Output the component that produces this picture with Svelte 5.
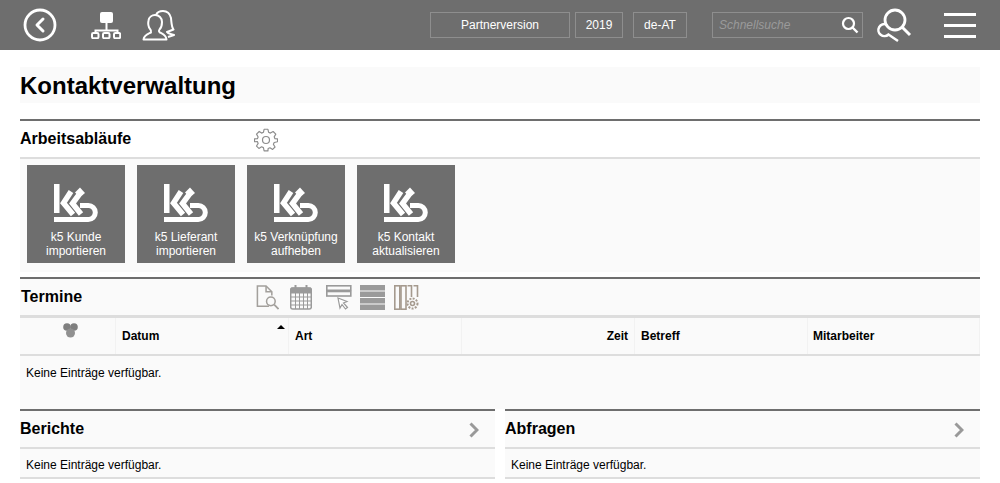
<script>
  const tiles = [
    ['k5 Kunde', 'importieren'],
    ['k5 Lieferant', 'importieren'],
    ['k5 Verknüpfung', 'aufheben'],
    ['k5 Kontakt', 'aktualisieren']
  ];
  const cols = [
    { label: 'Datum', cls: 'sorted' },
    { label: 'Art', cls: '' },
    { label: 'Zeit', cls: 'right' },
    { label: 'Betreff', cls: '' },
    { label: 'Mitarbeiter', cls: 'last' }
  ];
  const panels = ['Berichte', 'Abfragen'];
</script>

<header class="top">
  <svg class="ic-back" viewBox="0 0 34 34" fill="none" stroke="#fff"><circle cx="17" cy="17" r="15" stroke-width="2.8"/><path d="M20 11l-6 6 6 6" stroke-width="3" stroke-linecap="round" stroke-linejoin="round"/></svg>
  <svg class="ic-org" viewBox="0 0 30 27" fill="none" stroke="#fff" stroke-width="2"><rect x="9" y="0" width="13" height="11" rx="2" fill="#fff" stroke="none"/><path d="M15.500 11v8M4.500 21v-2.500h22V21"/><rect x="1" y="21" width="6.500" height="5.200" rx="1.300"/><rect x="12" y="21" width="6.500" height="5.200" rx="1.300"/><rect x="23" y="21" width="6.200" height="5.200" rx="1.300"/></svg>
  <svg class="ic-users" viewBox="0 0 33 31" fill="none" stroke="#fff" stroke-width="2" stroke-linejoin="round"><path d="M1.500 29.500C2 25 6 24 9 22.500C9.500 21 9 20 8 19C6.500 17 6 13 6.500 10.500C7 7 10 5 13 5C17 5 20 8 20 12C20 15 19 18 17.500 19.500C16.500 21 17 22 18 22.500C21 24 24 25 24.500 29.500Z"/><path d="M14 5C15 2.500 18 1 21 1C25 1 28 4 29 8C29.500 13 29.500 17 31.500 19.500L25 22C26 24 30 24 32 25L26 27"/></svg>
  <div class="field f-version">Partnerversion</div>
  <div class="field f-year">2019</div>
  <div class="field f-lang">de-AT</div>
  <div class="field f-search">
    <span class="ph">Schnellsuche</span>
    <svg viewBox="0 0 18 18" fill="none" stroke="#fff"><circle cx="7.500" cy="7.500" r="5.500" stroke-width="2.200"/><path d="M11.500 11.500l5 5" stroke-width="2.400"/></svg>
  </div>
  <svg class="ic-bigsearch" viewBox="0 0 33 33" fill="none" stroke="#fff"><circle cx="17" cy="11" r="10" stroke-width="2.800"/><path d="M24 18l8 8" stroke-width="3"/><path d="M8.500 15.500A6 6 0 1 0 10.500 25.500L20 32" stroke-width="2.500"/></svg>
  <div class="burger"><i></i><i></i><i></i></div>
</header>

<main class="page">
  <h1>Kontaktverwaltung</h1>

  <section class="workflow">
    <div class="head head-white">
      <h2>Arbeitsabläufe</h2>
      <svg class="ic-gear" viewBox="0 0 24 24" fill="none" stroke="#8c8c8c" stroke-width="1.200" stroke-linejoin="round"><path d="M10 1h4l.7 3.200 1.900.8L19.400 3.300l2.800 2.800-1.700 2.800.8 1.900L24 11v3l-3.500.8-.8 1.900 1.700 2.800-2.500 2.500-2.800-1.700-1.900.8L14 23.500h-4l-.7-3.400-1.900-.8-2.800 1.700-2.500-2.500 1.700-2.800-.8-1.900L0 14v-3l3-.1.800-1.900L2.100 6.100l2.800-2.800L7.400 5l1.900-.8z" transform="translate(.5 .3) scale(.96)"/><circle cx="12" cy="12" r="3.500"/></svg>
    </div>
    <div class="tiles">
      {#each tiles as t}
        <div class="tile">
          <svg class="logo" viewBox="0 0 44 38" fill="none" stroke="#fff">
            <path d="M0 0h5.500v29H0z" fill="#fff" stroke="none"/>
            <path d="M17 7.500L9.500 19 19 30.500" stroke-width="5.500"/>
            <path d="M27 8L18.500 19.500 27 30" stroke-width="5.500"/>
            <path d="M0 35.500H34.300A7 7 0 0 0 34.300 21.500H26" stroke-width="5"/>
            <path d="M21 8.500L26 3.500l5 5.500-3 2.500-4 0z" fill="#fff" stroke="none"/>
          </svg>
          <span>{t[0]}</span>
          <span>{t[1]}</span>
        </div>
      {/each}
    </div>
  </section>

  <section class="dates">
    <div class="head head-dates">
      <h2>Termine</h2>
      <div class="tools">
        <svg class="t1" viewBox="0 0 23 26" fill="none" stroke="#a3a09c" stroke-width="1.600"><path d="M13 22H1V1h9l6 6v4"/><path d="M10 1v6h6"/><circle cx="15" cy="17" r="4.500"/><path d="M18.500 20.500l4.500 4.500" stroke-width="1.800"/></svg>
        <svg class="t2" viewBox="0 0 22 25" fill="none" stroke="#9a9a9a"><rect x=".7" y="3" width="20.600" height="21" rx="2" stroke-width="1.500"/><path d="M1 3h20v5H1z" fill="#9a9a9a"/><path d="M5.500 0v5M16.500 0v5" stroke-width="2"/><path d="M1 12h20M1 16h20M1 20h20M5.500 8v16M9.500 8v16M13.500 8v16M17.500 8v16" stroke-width="1"/></svg>
        <svg class="t3" viewBox="0 0 26 25" fill="none" stroke="#9a9a9a"><rect x=".8" y=".8" width="24" height="4.500" stroke-width="1.600"/><rect x=".8" y="6.500" width="24" height="4.500" stroke-width="1.600"/><path d="M12 13l9 3.500-3.500 1.500 4 4.500-2 1.500-3.500-4.500-2 3.500z" fill="#fff" stroke-width="1.200"/></svg>
        <svg class="t4" viewBox="0 0 25 25" fill="#9a9a9a"><rect width="25" height="5.500"/><rect y="6.500" width="25" height="5.500"/><rect y="13" width="25" height="5.500"/><rect y="19.500" width="25" height="5.500"/></svg>
        <svg class="t5" viewBox="0 0 25 25" fill="none" stroke="#a59a8e" stroke-width="1.600"><rect x=".8" y=".8" width="5" height="23.400"/><rect x="7" y=".8" width="5" height="23.400"/><path d="M13.500.8h4V12M19.500.8h4V12"/><circle cx="18.500" cy="18.500" r="2"/><circle cx="18.500" cy="18.500" r="5" stroke-width="2" stroke-dasharray="2 1.300"/></svg>
      </div>
    </div>
    <div class="thead">
      <div class="th th-first">
        <svg class="ic-circles" viewBox="0 0 15 15" fill="#7f7f7f"><circle cx="4" cy="4" r="3.800"/><circle cx="11" cy="4" r="3.800"/><circle cx="7.500" cy="10" r="4.500" fill="#909090"/></svg>
      </div>
      {#each cols as c}
        <div class="th {c.cls}">
          {c.label}
          {#if c.cls === 'sorted'}<i class="arrow"></i>{/if}
        </div>
      {/each}
    </div>
    <p class="empty">Keine Einträge verfügbar.</p>
  </section>

  <div class="panels">
    {#each panels as p}
      <section class="panel">
        <div class="head head-panel">
          <h2>{p}</h2>
          <svg class="ic-chev" viewBox="0 0 10 16" fill="none" stroke="#999" stroke-width="3"><path d="M1.500 1.500L8 8l-6.500 6.500"/></svg>
        </div>
        <p class="empty-sm">Keine Einträge verfügbar.</p>
      </section>
    {/each}
  </div>
</main>

<style>
  :global(body) {
    margin: 0;
    background: #fff;
    font-family: "Liberation Sans", Arial, sans-serif;
    color: #000;
  }
  svg { display: block; flex: none; }

  .top {
    height: 50px;
    background: #6e6e6e;
    display: flex;
    align-items: center;
    color: #fff;
    font-size: 12px;
  }
  .ic-back { width: 34px; height: 34px; margin-left: 23px; }
  .ic-org { width: 30px; height: 27px; margin-left: 34px; }
  .ic-users { width: 33px; height: 31px; margin-left: 21px; }
  .field {
    height: 26px;
    box-sizing: border-box;
    border: 1px solid #8e8e8e;
    display: flex;
    align-items: center;
    justify-content: center;
  }
  .f-version { width: 140px; margin-left: 255px; }
  .f-year { width: 48px; margin-left: 5px; }
  .f-lang { width: 54px; margin-left: 10px; }
  .f-search {
    width: 151px;
    margin-left: 25px;
    justify-content: space-between;
    padding: 0 3px 0 6px;
  }
  .f-search svg { width: 18px; height: 18px; }
  .ph { color: #9a9a9a; font-style: italic; }
  .ic-bigsearch { width: 33px; height: 33px; margin-left: 15px; margin-top: 1px; overflow: visible; }
  .burger {
    width: 32px;
    height: 25px;
    margin-left: 33px;
    display: flex;
    flex-direction: column;
    justify-content: space-between;
  }
  .burger i { display: block; height: 3px; background: #fff; }

  .page { padding: 17px 20px 0; }
  h1 {
    margin: 0 0 16px;
    height: 36px;
    line-height: 37px;
    background: #fafafa;
    font-size: 24px;
    font-weight: 700;
  }
  h2 { margin: 0; font-size: 16px; font-weight: 700; }

  .head {
    height: 36px;
    display: flex;
    align-items: center;
    border-top: 2px solid #6e6e6e;
  }
  .head-white { border-bottom: 2px solid #ddd; }
  .head-white h2 { width: 234px; }
  .ic-gear { width: 24px; height: 24px; margin-top: 2px; }

  .tiles {
    height: 113px;
    box-sizing: border-box;
    background: #fafafa;
    padding: 6px 7px 0;
    display: flex;
    align-items: flex-start;
    gap: 12px;
  }
  .tile {
    width: 98px;
    height: 98px;
    background: #6e6e6e;
    color: #fff;
    font-size: 12px;
    line-height: 14px;
    display: flex;
    flex-direction: column;
    align-items: center;
    white-space: nowrap;
  }
  .logo { width: 44px; height: 38px; margin: 19px 0 8px; }

  .dates { margin-top: 5px; background: #fafafa; height: 132px; }
  .head-dates h2 { width: 235px; padding-left: 1px; }
  .tools { display: flex; align-items: flex-start; }
  .tools svg { height: 25px; }
  .t1 { width: 23px; }
  .t2 { width: 22px; margin-left: 11px; }
  .t3 { width: 26px; margin-left: 14px; }
  .t4 { width: 25px; margin-left: 8px; }
  .t5 { width: 25px; margin-left: 9px; }

  .thead {
    display: grid;
    grid-template-columns: 96px repeat(4, 173px) 172px;
    height: 36px;
    border-top: 3px solid #ddd;
    border-bottom: 2px solid #ddd;
  }
  .th {
    position: relative;
    box-sizing: border-box;
    border-right: 1px solid #f2f2f2;
    padding: 11px 6px 0 6px;
    font-size: 12px;
    font-weight: 700;
    line-height: 14px;
    white-space: nowrap;
  }
  .th.right { text-align: right; }
  .th.last { padding-left: 5px; }
  .th-first { display: flex; justify-content: center; padding: 5px 0 0 6px; }
  .ic-circles { width: 15px; height: 15px; }
  .arrow {
    position: absolute;
    right: 3px;
    top: 7px;
    width: 0;
    height: 0;
    border-left: 4px solid transparent;
    border-right: 4px solid transparent;
    border-bottom: 4px solid #000;
  }
  .empty {
    margin: 0;
    padding: 10px 6px 0;
    font-size: 12px;
    line-height: 14px;
  }

  .panels { display: flex; justify-content: space-between; }
  .panel { width: 475px; background: #fafafa; }
  .head-panel { justify-content: space-between; padding-right: 16px; border-bottom: 2px solid #ddd; }
  .ic-chev { width: 10px; height: 16px; margin-top: 2px; }
  .empty-sm {
    margin: 0;
    height: 19px;
    padding: 9px 6px 0;
    font-size: 12px;
    line-height: 14px;
    border-bottom: 2px solid #ddd;
  }
</style>
